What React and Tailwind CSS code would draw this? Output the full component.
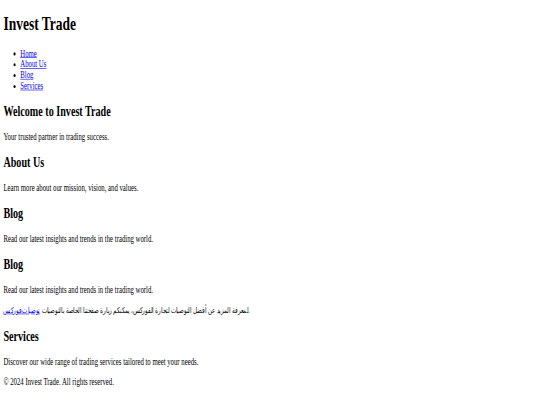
// Plain default-styled page, captured at 1280 wide and squeezed into 540x405,
// so the whole document is laid out at its natural size and scaled down.

const NAV = ['Home', 'About Us', 'Blog', 'Services']

function Section({ title, children }) {
  return (
    <section>
      <h2 className="my-[19.92px] text-[24px] font-bold">{title}</h2>
      {children}
    </section>
  )
}

export default function App() {
  return (
    <div className="h-[405px] w-[540px] overflow-hidden bg-white">
      <div className="flow-root w-[1280px] origin-top-left scale-x-[0.422] scale-y-[0.602] px-2 font-['Liberation_Serif',serif] text-[16px] leading-[normal] text-black">
        <header>
          <h1 className="my-[21.44px] text-[32px] font-bold">Invest Trade</h1>
          <nav>
            <ul className="my-4 list-disc pl-10">
              {NAV.map(item => (
                <li key={item}>
                  <a href="#" className="text-[#0000ee] underline">{item}</a>
                </li>
              ))}
            </ul>
          </nav>
        </header>

        <main>
          <Section title="Welcome to Invest Trade">
            <p className="my-4">Your trusted partner in trading success.</p>
          </Section>
          <Section title="About Us">
            <p className="my-4">Learn more about our mission, vision, and values.</p>
          </Section>
          <Section title="Blog">
            <p className="my-4">Read our latest insights and trends in the trading world.</p>
          </Section>
          <Section title="Blog">
            <p className="my-4">Read our latest insights and trends in the trading world.</p>
            <p className="my-4 h-[18.4px] text-[12.7px] leading-[18.4px]">
              لمعرفة المزيد عن أفضل التوصيات لتجارة الفوركس، يمكنكم زيارة صفحتنا الخاصة بالتوصيات{' '}
              <a href="#" className="text-[#0000ee] underline">توصيات فوركس</a>.
            </p>
          </Section>
          <Section title="Services">
            <p className="my-4">Discover our wide range of trading services tailored to meet your needs.</p>
          </Section>
        </main>

        <footer>
          <p className="mt-4 mb-2">© 2024 Invest Trade. All rights reserved.</p>
        </footer>
      </div>
    </div>
  )
}
